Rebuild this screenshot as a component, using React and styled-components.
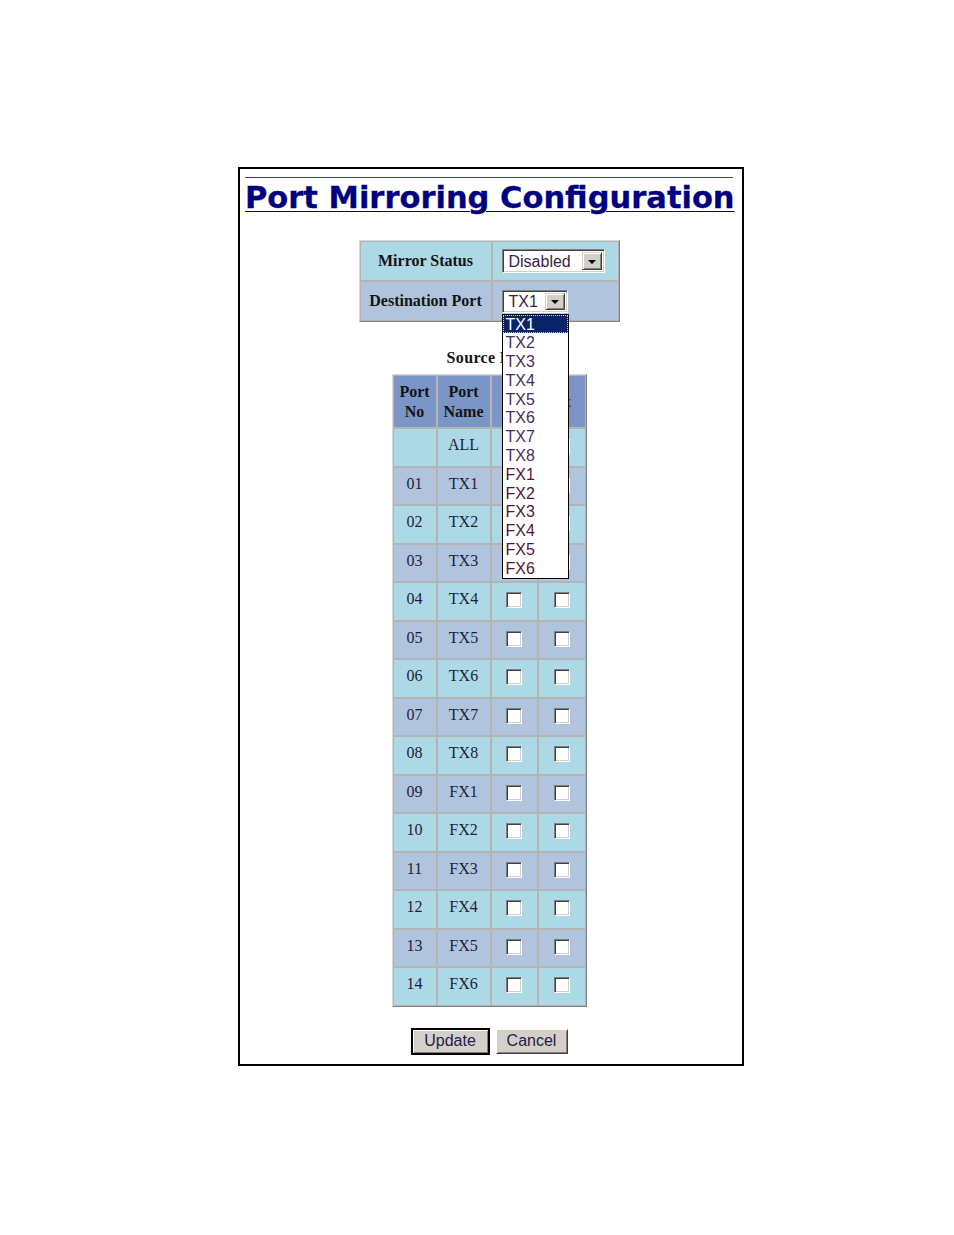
import React from "react";
import styled, { createGlobalStyle } from "styled-components";

const GlobalStyle = createGlobalStyle`
  html, body { margin: 0; padding: 0; background: #fff; }
  body { font-family: "Liberation Serif", "Times New Roman", serif; }
  * { box-sizing: border-box; }
`;

const Page = styled.div`
  padding: 167px 0 0 238px;
  min-height: 1235px;
`;

const Frame = styled.div`
  width: 506px;
  border: 2px solid #000;
  padding: 8px 9px 9px 5px;
  display: flex;
  flex-direction: column;
  align-items: center;
  background: #fff;
`;

const Rule = styled.div`
  align-self: stretch;
  height: 1px;
  background: #3c3c9c;
`;

const Title = styled.h1`
  margin: 2px 0 0 0;
  align-self: flex-start;
  font-family: "DejaVu Sans", Verdana, sans-serif;
  font-weight: bold;
  font-size: 30.5px;
  line-height: 35px;
  color: #000080;
  text-decoration: underline;
  text-decoration-thickness: 1px;
  text-underline-offset: 3px;
  white-space: nowrap;
  -webkit-text-stroke: 0.3px #000080;
`;

const Grid = styled.div`
  display: grid;
  grid-template-columns: ${(p) => p.$cols};
  grid-template-rows: ${(p) => p.$first || p.$rows};
  grid-auto-rows: ${(p) => p.$rows};
  gap: 2px;
  padding: 1px;
  background: #b4b4b4;
  border: 1px solid;
  border-color: #d8d8d8 #808080 #808080 #d8d8d8;
  margin-top: ${(p) => p.$mt || 0}px;
`;

const Cell = styled.div`
  background: ${(p) => p.$bg};
  display: flex;
  align-items: center;
  justify-content: ${(p) => (p.$left ? "flex-start" : "center")};
  padding: ${(p) => (p.$left ? "0 0 0 9px" : p.$pb ? `0 0 ${p.$pb}px 0` : "0")};
  font-family: "Liberation Serif", "Times New Roman", serif;
  font-size: 16px;
  font-weight: ${(p) => (p.$bold ? "bold" : "normal")};
  color: ${(p) => (p.$link ? "#1a2aa0" : p.$bold ? "#141414" : "#1e1e3c")};
  text-align: center;
  line-height: 20px;
  position: relative;
`;

const SelectWrap = styled.div`
  position: relative;
  text-align: left;
`;

const SelectBox = styled.div`
  width: ${(p) => p.$w}px;
  height: ${(p) => p.$h}px;
  display: flex;
  border-style: solid;
  border-width: 1px;
  border-color: #808080 #ffffff #ffffff #808080;
  box-shadow: inset 1px 1px 0 #404040, inset -1px -1px 0 #d4d0c8;
  padding: 2px;
  background: #fff;
`;

const SelectText = styled.div`
  flex: 1;
  background: #fff;
  font-family: "Liberation Sans", Arial, sans-serif;
  font-size: 16px;
  color: #3a1f44;
  display: flex;
  align-items: center;
  padding-left: 4px;
  padding-top: 1px;
`;

const ArrowButton = styled.div`
  width: 20px;
  background: #d4d0c8;
  border-style: solid;
  border-width: 1px;
  border-color: #d4d0c8 #404040 #404040 #d4d0c8;
  box-shadow: inset 1px 1px 0 #ffffff, inset -1px -1px 0 #808080;
  display: flex;
  align-items: center;
  justify-content: center;
`;

const Triangle = styled.div`
  width: 0;
  height: 0;
  border-left: 4px solid transparent;
  border-right: 4px solid transparent;
  border-top: 4px solid #000;
  margin-top: 1px;
`;

const DropList = styled.div`
  position: absolute;
  top: calc(100% + 1px);
  left: 0;
  width: 67px;
  border: 1px solid #000;
  background: #fff;
  z-index: 5;
  text-align: left;
`;

const DropItem = styled.div`
  height: 18.8px;
  line-height: 17px;
  padding-left: 2px;
  font-family: "Liberation Sans", Arial, sans-serif;
  font-size: 16px;
  text-align: left;
  color: ${(p) => (p.$sel ? "#fff" : p.$fx ? "#561438" : "#4b2d5a")};
  background: ${(p) => (p.$sel ? "#0a246a" : "transparent")};
  border: 1px ${(p) => (p.$sel ? "dotted #d8d890" : "solid transparent")};
`;

const Caption = styled.div`
  margin-top: 26px;
  font-family: "Liberation Serif", "Times New Roman", serif;
  font-weight: bold;
  font-size: 16px;
  letter-spacing: 0.35px;
  line-height: 20px;
  color: #141414;
`;

const Check = styled.span`
  display: inline-block;
  width: 16px;
  height: 16px;
  background: #fff;
  border-style: solid;
  border-width: 1px;
  border-color: #808080 #ffffff #ffffff #808080;
  box-shadow: inset 1px 1px 0 #404040, inset -1px -1px 0 #d4d0c8;
`;

const ButtonRow = styled.div`
  margin-top: 21px;
  display: flex;
  align-items: center;
  gap: 6px;
`;

const Button = styled.button`
  font-family: "Liberation Sans", Arial, sans-serif;
  font-size: 16px;
  color: #24204a;
  background: #d4d0c8;
  height: ${(p) => (p.$default ? 27 : 25)}px;
  width: ${(p) => p.$w}px;
  padding: 0;
  margin: 0;
  border-style: solid;
  border-width: ${(p) => (p.$default ? 2 : 1)}px;
  border-color: ${(p) =>
    p.$default ? "#000 #000 #000 #000" : "#ffffff #404040 #404040 #ffffff"};
  box-shadow: ${(p) =>
    p.$default
      ? "inset 1px 1px 0 #ffffff, inset -1px -1px 0 #808080"
      : "inset 1px 1px 0 #d4d0c8, inset -1px -1px 0 #808080"};
`;

const LIGHT = "#add8e6";
const STEEL = "#b0c4de";
const HEAD = "#7b95c7";

const ports = [
  "TX1", "TX2", "TX3", "TX4", "TX5", "TX6", "TX7", "TX8",
  "FX1", "FX2", "FX3", "FX4", "FX5", "FX6",
];

function Select({ w, h, value, children }) {
  return (
    <SelectWrap>
      <SelectBox $w={w} $h={h}>
        <SelectText>{value}</SelectText>
        <ArrowButton>
          <Triangle />
        </ArrowButton>
      </SelectBox>
      {children}
    </SelectWrap>
  );
}

export default function App() {
  const rows = [{ no: "", name: "ALL" }].concat(
    ports.map((p, i) => ({ no: String(i + 1).padStart(2, "0"), name: p }))
  );
  return (
    <Page>
      <GlobalStyle />
      <Frame>
        <Rule />
        <Title>Port Mirroring Configuration</Title>

        <Grid $cols="130px 125px" $rows="38px" $mt={25}>
          <Cell $bg={LIGHT} $bold>Mirror Status</Cell>
          <Cell $bg={LIGHT} $left>
            <Select w={103} h={24} value="Disabled" />
          </Cell>
          <Cell $bg={STEEL} $bold>Destination Port</Cell>
          <Cell $bg={STEEL} $left>
            <Select w={66} h={23} value="TX1">
              <DropList>
                {ports.map((p, i) => (
                  <DropItem key={p} $sel={i === 0} $fx={p.startsWith("FX")}>
                    {p}
                  </DropItem>
                ))}
              </DropList>
            </Select>
          </Cell>
        </Grid>

        <Caption>Source Port</Caption>

        <Grid $cols="42px 52px 45px 46px" $first="51px" $rows="36.5px" $mt={6}>
          <Cell $bg={HEAD} $bold>Port<br />No</Cell>
          <Cell $bg={HEAD} $bold>Port<br />Name</Cell>
          <Cell $bg={HEAD} $bold $link>Rx</Cell>
          <Cell $bg={HEAD} $bold $link>Tx</Cell>
          {rows.map((r, i) => {
            const bg = i % 2 === 0 ? LIGHT : STEEL;
            return (
              <React.Fragment key={r.name}>
                <Cell $bg={bg} $pb={4}>{r.no}</Cell>
                <Cell $bg={bg} $pb={4}>{r.name}</Cell>
                <Cell $bg={bg} $pb={2}><Check /></Cell>
                <Cell $bg={bg} $pb={2}><Check /></Cell>
              </React.Fragment>
            );
          })}
        </Grid>

        <ButtonRow>
          <Button $default $w={79}>Update</Button>
          <Button $w={72}>Cancel</Button>
        </ButtonRow>
      </Frame>
    </Page>
  );
}
